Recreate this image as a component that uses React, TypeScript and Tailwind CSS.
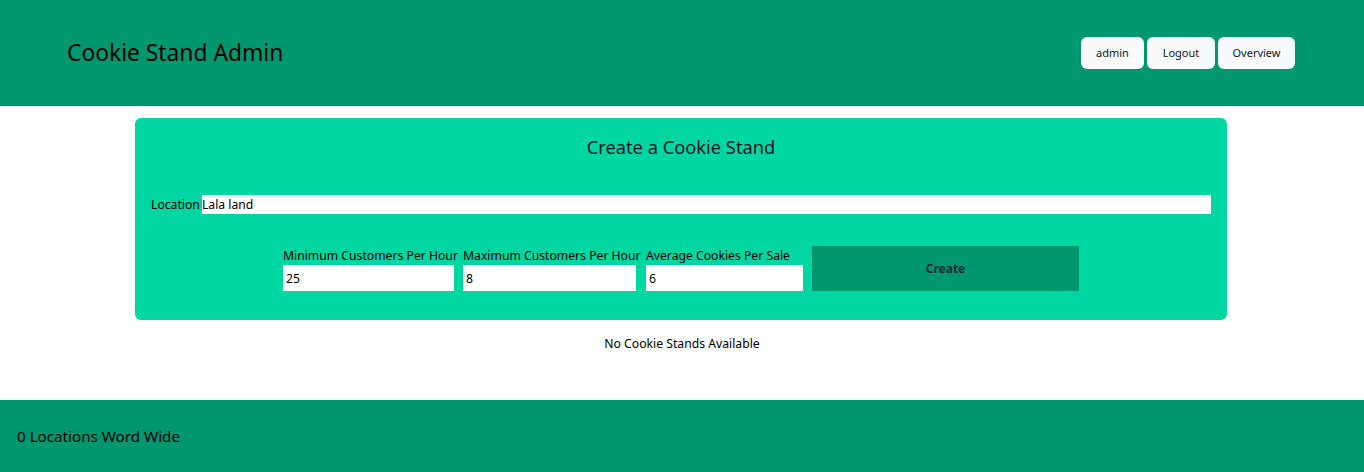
import React from "react";

export default function App() {
  const font = { fontFamily: '"Segoe UI", "Noto Sans", "Open Sans", sans-serif' };
  return (
    <div className="w-[1364px] h-[472px] bg-white flex flex-col text-black" style={font}>
      <header className="h-[106px] bg-[#00976e] flex items-center justify-between pl-[67px] pr-[69px]">
        <h1 className="text-[22.8px] leading-none">Cookie Stand Admin</h1>
        <div className="flex gap-[3px] text-[11px]">
          <button className="w-[63px] h-[32px] rounded-md bg-[#f8fafc] text-gray-900">admin</button>
          <button className="w-[68px] h-[32px] rounded-md bg-[#f8fafc] text-gray-900">Logout</button>
          <button className="w-[77px] h-[32px] rounded-md bg-[#f8fafc] text-gray-900">Overview</button>
        </div>
      </header>
      <main className="flex-1 flex flex-col items-center">
        <form className="mt-[12px] mr-[2px] w-[1092px] h-[202px] rounded-md bg-[#00d6a1] px-[16px] pt-[17px] flex flex-col">
          <h2 className="text-center text-[18.3px] leading-[24px] text-gray-900">Create a Cookie Stand</h2>
          <div className="mt-[36px] flex items-center text-[12.2px] leading-[19px]">
            <label className="mr-[2px]">Location</label>
            <input
              className="flex-1 h-[19px] bg-white outline-none px-0"
              defaultValue="Lala land"
            />
          </div>
          <div className="mt-[32px] flex justify-center items-end gap-[9px] text-[12.2px]">
            <div className="flex flex-col w-[171px]">
              <label className="leading-[19px] whitespace-nowrap">Minimum Customers Per Hour</label>
              <input className="h-[26px] bg-white outline-none px-[3px]" defaultValue="25" />
            </div>
            <div className="flex flex-col w-[173px]">
              <label className="leading-[19px] whitespace-nowrap">Maximum Customers Per Hour</label>
              <input className="h-[26px] bg-white outline-none px-[3px]" defaultValue="8" />
            </div>
            <div className="flex flex-col w-[157px] ml-[1px]">
              <label className="leading-[19px] whitespace-nowrap">Average Cookies Per Sale</label>
              <input className="h-[26px] bg-white outline-none px-[3px]" defaultValue="6" />
            </div>
            <button type="button" className="w-[267px] h-[45px] bg-[#00976e] font-bold text-[12px] text-gray-800">
              Create
            </button>
          </div>
        </form>
        <p className="mt-[15px] text-[12.2px] leading-[18px]">No Cookie Stands Available</p>
      </main>
      <footer className="h-[72px] bg-[#00976e] flex items-center pl-[17px]">
        <p className="text-[15.2px]">0 Locations Word Wide</p>
      </footer>
    </div>
  );
}
